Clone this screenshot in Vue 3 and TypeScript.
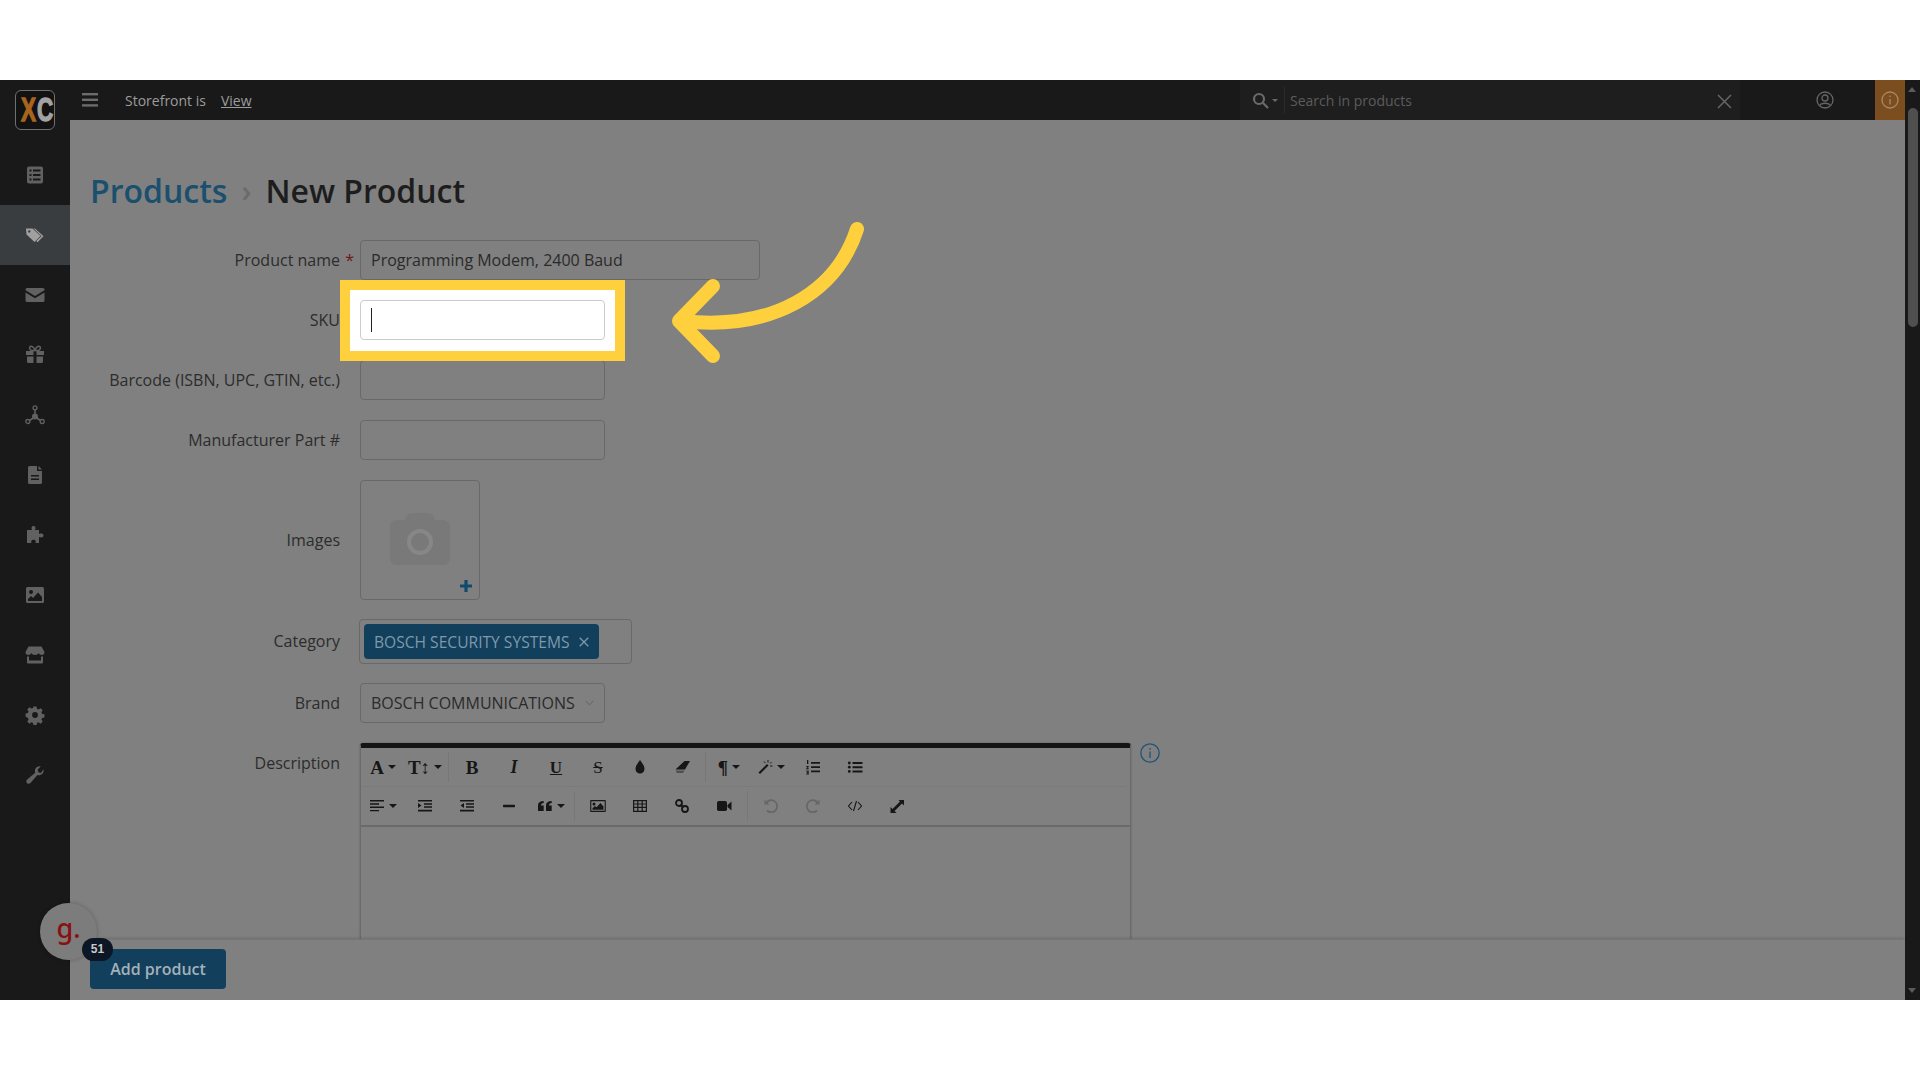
<template>
  <div class="page">
    <div class="app">
      <aside class="sidebar">
        <div class="logo-row">
          <div class="logo"><span class="logo-x">X</span><span class="logo-c">C</span></div>
        </div>
        <nav class="nav">
          <div v-for="item in navItems" :key="item.name" class="nav-item" :class="{ active: item.name === 'tag' }">
            <svg width="20" height="20" viewBox="0 0 20 20" fill="currentColor" v-html="item.svg"></svg>
          </div>
        </nav>
      </aside>

      <div class="center">
        <header class="topbar">
          <svg class="burger" width="16" height="14" viewBox="0 0 16 14" fill="currentColor">
            <rect width="16" height="2.4" /><rect y="5.6" width="16" height="2.4" /><rect y="11.2" width="16" height="2.4" />
          </svg>
          <span class="store">Storefront is</span>
          <a class="view">View</a>
          <div class="search">
            <svg width="17" height="17" viewBox="0 0 17 17" fill="none" stroke="currentColor" stroke-width="2.2">
              <circle cx="7" cy="7" r="5" /><path d="M10.8 10.8 16 16" />
            </svg>
            <i class="caret small"></i>
            <span class="search-sep"></span>
            <span class="search-text">Search in products</span>
            <svg class="search-x" width="15" height="15" viewBox="0 0 15 15" stroke="currentColor" stroke-width="1.5">
              <path d="M1 1l13 13M14 1 1 14" />
            </svg>
          </div>
          <div class="user">
            <svg width="18" height="18" viewBox="0 0 18 18" fill="none" stroke="currentColor" stroke-width="1.3">
              <circle cx="9" cy="9" r="8" /><circle cx="9" cy="7" r="3" /><path d="M3.8 14.5C5 11.5 13 11.500 14.2 14.5" />
            </svg>
          </div>
          <div class="notice">
            <svg width="18" height="18" viewBox="0 0 18 18" fill="none" stroke="currentColor" stroke-width="1.3">
              <circle cx="9" cy="9" r="8" /><path d="M9 8v5.5M9 4.4v1.6" />
            </svg>
          </div>
        </header>

        <main class="main">
          <h1 class="title"><span class="crumb">Products</span><span class="crumb-sep">›</span><span>New Product</span></h1>

          <div class="form">
            <div class="row">
              <label class="label">Product name<span class="star">*</span></label>
              <div class="field wide">Programming Modem, 2400 Baud</div>
            </div>
            <div class="row">
              <label class="label">SKU</label>
              <div class="focus">
                <div class="field sku"><span class="text-caret"></span></div>
              </div>
            </div>
            <div class="row">
              <label class="label">Barcode (ISBN, UPC, GTIN, etc.)</label>
              <div class="field"></div>
            </div>
            <div class="row">
              <label class="label">Manufacturer Part #</label>
              <div class="field"></div>
            </div>
            <div class="row">
              <label class="label">Images</label>
              <div class="image-box">
                <svg class="camera" width="60" height="52" viewBox="0 0 60 52">
                  <path fill="#797979" d="M6 7h9c1-4 3-7 7-7h16c4 0 6 3 7 7h9c3 0 6 3 6 6v33c0 3-3 6-6 6H6c-3 0-6-3-6-6V13c0-3 3-6 6-6z" />
                  <circle cx="30" cy="29" r="11" fill="#797979" stroke="#878787" stroke-width="4" />
                </svg>
                <svg class="plus" width="12" height="12" viewBox="0 0 12 12" fill="#124a6c">
                  <path d="M4.4 0h3.2v4.4H12v3.2H7.6V12H4.4V7.6H0V4.4h4.4z" />
                </svg>
              </div>
            </div>
            <div class="row tight">
              <label class="label">Category</label>
              <div class="tags">
                <span class="tag">BOSCH SECURITY SYSTEMS
                  <svg width="10" height="10" viewBox="0 0 10 10" stroke="currentColor" stroke-width="1.3"><path d="M.7.7l8.6 8.6M9.3.7.7 9.3" /></svg>
                </span>
              </div>
            </div>
            <div class="row">
              <label class="label">Brand</label>
              <div class="field select">
                BOSCH COMMUNICATIONS
                <svg width="9" height="6" viewBox="0 0 9 6" fill="none" stroke="#6b6b6b" stroke-width="1.1"><path d="M.7.8 4.5 4.8 8.3.8" /></svg>
              </div>
            </div>
            <div class="row top">
              <label class="label desc">Description</label>
              <div class="editor">
                <div class="toolbar">
                  <div class="tool-row">
                    <div v-for="(group, g) in toolbarTop" :key="g" class="tool-group">
                      <div v-for="t in group" :key="t.id" class="tool">
                        <span v-if="t.text" class="tool-text" :class="t.cls">{{ t.text }}</span>
                        <svg v-else width="16" height="16" viewBox="0 0 16 16" fill="currentColor" v-html="t.svg"></svg>
                        <i v-if="t.caret" class="caret"></i>
                      </div>
                    </div>
                  </div>
                  <div class="tool-row second">
                    <div v-for="(group, g) in toolbarBottom" :key="g" class="tool-group">
                      <div v-for="t in group" :key="t.id" class="tool" :class="{ muted: t.muted }">
                        <span v-if="t.text" class="tool-text" :class="t.cls">{{ t.text }}</span>
                        <svg v-else width="16" height="16" viewBox="0 0 16 16" fill="currentColor" v-html="t.svg"></svg>
                        <i v-if="t.caret" class="caret"></i>
                      </div>
                    </div>
                  </div>
                </div>
                <div class="edit-area"></div>
              </div>
              <svg class="info" width="20" height="20" viewBox="0 0 20 20" fill="none" stroke="#1d5475" stroke-width="1.3">
                <circle cx="10" cy="10" r="9.2" /><path d="M10 8.5v6.5M10 5v1.8" />
              </svg>
            </div>
          </div>

          <!-- callout arrow pointing at the SKU field -->
          <svg class="arrow" width="210" height="150" viewBox="0 0 210 150" fill="none" stroke="#fed03e" stroke-width="14" stroke-linecap="round" stroke-linejoin="round">
            <path d="M191 10C170 75 105 112 16 102" />
            <path d="M47 67 13 102 47 137" />
          </svg>

          <footer class="footer">
            <button class="add">Add product</button>
          </footer>
        </main>
      </div>

      <div class="scroll">
        <i class="scroll-up"></i>
        <div class="thumb"></div>
        <i class="scroll-down"></i>
      </div>

      <div class="chat">
        <span class="chat-g">g.</span>
        <span class="chat-count">51</span>
      </div>
    </div>
  </div>
</template>

<script setup lang="ts">
interface Tool {
  id: string
  text?: string
  cls?: string
  svg?: string
  caret?: boolean
  muted?: boolean
}

const navItems = [
  { name: 'orders', svg: '<path d="M4 1.500h12A2 2 0 0 1 18 3.500v13a2 2 0 0 1-2 2H4a2 2 0 0 1-2-2v-13a2 2 0 0 1 2-2zM4.500 4.500v2h2v-2zm3.500 0v2h7.500v-2zM4.500 9v2h2V9zM8 9v2h7.500V9zm-3.500 4.500v2h2v-2zm3.500 0v2h7.500v-2z" fill-rule="evenodd"/>' },
  { name: 'tag', svg: '<path d="M1 3.500H7.500L15.500 11 9.500 17 1.500 9.500zM4.300 5.200A1.200 1.200 0 1 0 4.300 7.600 1.200 1.200 0 0 0 4.300 5.200z" fill-rule="evenodd"/><path d="M10 3.500l8.500 7.800-6 6-1.300-1.200 5.200-4.800L8.700 3.500z"/>' },
  { name: 'mail', svg: '<path d="M2 3h16a1.500 1.500 0 0 1 1.500 1.500v.7L10 11 .5 5.200v-.7A1.500 1.500 0 0 1 2 3z"/><path d="M.5 7.500 10 13.300l9.500-5.800v8A1.500 1.500 0 0 1 18 17H2a1.500 1.500 0 0 1-1.500-1.500z"/>' },
  { name: 'gift', svg: '<path d="M1 6h7.500v4H1zM11.500 6H19v4h-7.500zM2 11.500h6.500V18H3.500A1.500 1.500 0 0 1 2 16.500zM11.500 11.500H18v5a1.500 1.500 0 0 1-1.500 1.500h-5z"/><path d="M10 5C8 1 6.500 1 5.500 1.500 4 2.300 4.500 5 6.500 5.500h7C15.500 5 16 2.300 14.500 1.500 13.500 1 12 1 10 5z" fill="none" stroke="currentColor" stroke-width="1.500"/>' },
  { name: 'tree', svg: '<circle cx="10" cy="2.800" r="2" fill="none" stroke="currentColor" stroke-width="1.300"/><circle cx="2.800" cy="16.500" r="2" fill="none" stroke="currentColor" stroke-width="1.300"/><circle cx="17.200" cy="16.500" r="2" fill="none" stroke="currentColor" stroke-width="1.300"/><circle cx="10" cy="11.500" r="3"/><path d="M10 5v5M4.500 15.500 9 12.500M15.500 15.500 11 12.500" stroke="currentColor" stroke-width="1.600"/>' },
  { name: 'file', svg: '<path d="M4.500 1H12v5h5v11.500a1.500 1.500 0 0 1-1.500 1.500h-11A1.500 1.500 0 0 1 3 17.500v-15A1.500 1.500 0 0 1 4.500 1zM6 10v1.500h8V10zm0 3.500V15h8v-1.500z" fill-rule="evenodd"/><path d="M13.500 1 17 4.500h-3.500z"/>' },
  { name: 'puzzle', svg: '<path d="M2 5h5C6 3 6.500 1 8.500 1S11 3 10 5h4v4c2-1 4.500-.500 4.500 1.500S16 13 14 12v6h-3.500c.7-1.500.3-3.300-2-3.300S5.800 16.500 6.500 18H2z"/>' },
  { name: 'image', svg: '<path d="M2.500 2h15A1.500 1.500 0 0 1 19 3.500v13a1.500 1.500 0 0 1-1.500 1.500h-15A1.500 1.500 0 0 1 1 16.500v-13A1.500 1.500 0 0 1 2.500 2zM6 5a2 2 0 1 0 0 4 2 2 0 0 0 0-4zM3 16h14v-4l-4-4.500-5 5.500-2-2-3 3z" fill-rule="evenodd"/>' },
  { name: 'store', svg: '<path d="M3.500 1.500h13L19.500 7c0 1.800-1.200 3-2.700 3S14 9 13.700 8c-.5 1.200-2 2-3.700 2S6.800 9.200 6.300 8C6 9 4.700 10 3.200 10S.5 8.800.5 7z"/><path d="M2 11.500h2v4h12v-4h2v6a1 1 0 0 1-1 1H3a1 1 0 0 1-1-1z"/>' },
  { name: 'gear', svg: '<path d="M8.300.5h3.400l.5 2.600 1.800.8 2.200-1.500 2.400 2.400-1.500 2.200.8 1.800 2.600.5v3.400l-2.600.5-.8 1.800 1.500 2.200-2.400 2.400-2.200-1.500-1.800.8-.5 2.600H8.300l-.5-2.600-1.800-.8-2.200 1.500-2.400-2.400 1.500-2.200-.8-1.800L-.5 11.700V8.300l2.600-.5.800-1.800L1.400 3.800l2.400-2.400L6 2.900l1.800-.8zM10 6.800a3.200 3.200 0 1 0 0 6.400 3.200 3.200 0 0 0 0-6.400z" fill-rule="evenodd" transform="translate(1 1) scale(.9)"/>' },
  { name: 'wrench', svg: '<path d="M18.500 4.200c.6 2.600-.8 5.200-3.300 5.800-1 .3-1.900.2-2.800-.1L5.500 18c-1 1-2.600 1.100-3.500.2-1-1-.9-2.600.2-3.600l8-6.800c-.4-1-.4-2-.2-3 .7-2.500 3.200-4 5.700-3.300l-3 3 .6 2.700 2.600.7z"/>' }
]

const ic = {
  drop: '<path d="M8 1c2 3 4.500 5.500 4.500 9a4.500 4.500 0 0 1-9 0C3.500 6.500 6 4 8 1z"/>',
  eraser: '<path d="M10.500 2H16l-5 8.500H1.500z"/><path d="M2 11.500h8.500L9 14H2.500z" opacity=".45"/>',
  wand: '<path d="M1.500 13.500 10 5l1.500 1.500L3 15z"/><path d="M11 1v2.500M14.500 3l-1.500 1.500M15.500 7H13M7 2.500 8.300 4" stroke="currentColor" fill="none"/>',
  ol: '<path d="M6 3h9v1.800H6zM6 7.200h9V9H6zM6 11.400h9v1.800H6z"/><path d="M2 1h1.300v4H2zM1.300 7h2.400v1l-1.300 1.200h1.300v1H1.300v-1l1.300-1.200H1.300zM1.300 11.500h2.400v4H1.300v-1h1.300v-.5H1.800v-1h.8v-.500H1.300z"/>',
  ul: '<path d="M5.500 3h10v2h-10zM5.500 7.200h10v2h-10zM5.500 11.400h10v2h-10z"/><circle cx="2.300" cy="4" r="1.400"/><circle cx="2.300" cy="8.200" r="1.400"/><circle cx="2.300" cy="12.400" r="1.400"/>',
  align: '<path d="M1 2h14v1.400H1zM1 5.300h9v1.400H1zM1 8.600h14V10H1zM1 11.900h9v1.400H1z"/>',
  outdent: '<path d="M1 2h14v1.600H1zM7 5.300h8v1.400H7zM7 8.300h8v1.400H7zM1 11.800h14v1.600H1z"/><path d="M1 5l3.500 2.500L1 10z"/>',
  indent: '<path d="M1 2h14v1.600H1zM7 5.300h8v1.400H7zM7 8.300h8v1.400H7zM1 11.800h14v1.600H1z"/><path d="M5 5 1.500 7.500 5 10z"/>',
  hr: '<rect x="2" y="6.800" width="12" height="2.400" rx=".6"/>',
  quote: '<path d="M6.700 3v2C5 5.300 4 6 4 7.500h2.700V13H1V7.500C1 4.500 3 3 6.700 3zM14.700 3v2C13 5.300 12 6 12 7.500h2.700V13H9V7.500C9 4.500 11 3 14.700 3z"/>',
  picture: '<path d="M1 2h14a.8.8 0 0 1 .8.8v10.400a.8.8 0 0 1-.8.8H1a.8.8 0 0 1-.8-.8V2.800A.8.8 0 0 1 1 2zm.3 1.200v9.600h13.400V3.200zM4 4.500a1.500 1.500 0 1 1 0 3 1.500 1.500 0 0 1 0-3zM2.500 11.800v-1.500L5 8l1.500 1.300L10.500 5l3 3.500v3.300z" fill-rule="evenodd"/>',
  table: '<path d="M1 2h14v12H1zm1.200 1.200v2.200h3V3.200zm4.200 0v2.200h3.200V3.200zm4.400 0v2.200h3V3.200zM2.200 6.500v2.300h3V6.500zm4.200 0v2.300h3.200V6.500zm4.400 0v2.300h3V6.500zM2.200 10v2.800h3V10zm4.200 0v2.800h3.200V10zm4.400 0v2.800h3V10z" fill-rule="evenodd"/>',
  link: '<circle cx="5" cy="5" r="3" fill="none" stroke="currentColor" stroke-width="1.800"/><circle cx="11" cy="11" r="3" fill="none" stroke="currentColor" stroke-width="1.800"/><path d="M6.500 6.500 9.500 9.500" stroke="currentColor" stroke-width="1.800"/>',
  video: '<rect x="1" y="3" width="10" height="10" rx="1.800"/><path d="M11.500 7 15.500 3.500v9L11.500 9z"/>',
  undo: '<path d="M3.500 4.500A6 6 0 1 1 4 12.500" fill="none" stroke="currentColor" stroke-width="1.800"/><path d="M1.500 1.500v5h5z"/>',
  redo: '<path d="M12.500 4.500A6 6 0 1 0 12 12.500" fill="none" stroke="currentColor" stroke-width="1.800"/><path d="M14.500 1.500v5h-5z"/>',
  code: '<path d="M5 4 1.500 8 5 12M11 4l3.500 4L11 12M9.500 3 6.500 13" fill="none" stroke="currentColor" stroke-width="1.100"/>',
  full: '<path d="M9.500 2H15v5.500L13 5.500 5.500 13 7.500 15H1.500V9l2 2L11 3.500z"/>'
}

const toolbarTop: Tool[][] = [
  [
    { id: 'font', text: 'A', cls: 'serif big', caret: true },
    { id: 'size', text: 'T↕', cls: 'serif big', caret: true }
  ],
  [
    { id: 'bold', text: 'B', cls: 'serif big' },
    { id: 'italic', text: 'I', cls: 'serif italic' },
    { id: 'under', text: 'U', cls: 'serif under' },
    { id: 'strike', text: 'S', cls: 'serif strike' },
    { id: 'drop', svg: ic.drop },
    { id: 'eraser', svg: ic.eraser }
  ],
  [
    { id: 'para', text: '¶', cls: 'serif big', caret: true },
    { id: 'wand', svg: ic.wand, caret: true },
    { id: 'ol', svg: ic.ol },
    { id: 'ul', svg: ic.ul }
  ]
]

const toolbarBottom: Tool[][] = [
  [
    { id: 'align', svg: ic.align, caret: true },
    { id: 'outdent', svg: ic.outdent },
    { id: 'indent', svg: ic.indent },
    { id: 'hr', svg: ic.hr },
    { id: 'quote', svg: ic.quote, caret: true }
  ],
  [
    { id: 'picture', svg: ic.picture },
    { id: 'table', svg: ic.table },
    { id: 'link', svg: ic.link },
    { id: 'video', svg: ic.video }
  ],
  [
    { id: 'undo', svg: ic.undo, muted: true },
    { id: 'redo', svg: ic.redo, muted: true },
    { id: 'code', svg: ic.code },
    { id: 'full', svg: ic.full }
  ]
]
</script>

<style>
html,
body {
  margin: 0;
  background: #fff;
  overflow: hidden;
}
</style>

<style scoped>
.page {
  width: 1920px;
  height: 1080px;
  padding: 80px 0;
  box-sizing: border-box;
  background: #fff;
  font-family: "Open Sans", "Liberation Sans", sans-serif;
  font-size: 16px;
  color: #2a2a2a;
}

.app {
  position: relative;
  display: flex;
  height: 920px;
  background: #808080;
  overflow: hidden;
}

/* sidebar */
.sidebar {
  flex: 0 0 70px;
  background: #191919;
}

.logo-row {
  display: flex;
  justify-content: center;
  height: 65px;
  padding-top: 10px;
  box-sizing: border-box;
}

.logo {
  display: flex;
  align-items: center;
  justify-content: center;
  width: 40px;
  height: 40px;
  box-sizing: border-box;
  border: 1px solid #707070;
  border-radius: 6px;
  background: #121212;
  font-family: "Liberation Sans", sans-serif;
  font-size: 30px;
  font-weight: 700;
}

.logo-x,
.logo-c {
  display: block;
  width: 16px;
  transform: scale(0.75, 1.08);
  text-align: center;
  -webkit-text-stroke: 1.2px currentColor;
}

.logo-x {
  color: #a9651d;
}

.logo-c {
  color: #a3a3a3;
}

.nav-item {
  display: flex;
  align-items: center;
  justify-content: center;
  height: 60px;
  color: #616161;
}

.nav-item.active {
  background: #3a3d3f;
  color: #a0a0a0;
}

/* top bar */
.center {
  flex: 1;
  display: flex;
  flex-direction: column;
  min-width: 0;
}

.topbar {
  display: flex;
  align-items: center;
  flex: 0 0 40px;
  background: #191919;
  color: #9c9c9c;
  font-size: 14px;
}

.burger {
  margin-left: 12px;
  color: #6c6c6c;
}

.store {
  margin-left: 27px;
}

.view {
  margin-left: 15px;
  text-decoration: underline;
}

.search {
  display: flex;
  align-items: center;
  width: 500px;
  height: 40px;
  margin-left: auto;
  padding-left: 12px;
  box-sizing: border-box;
  background: #1e1e1e;
  color: #6a6a6a;
}

.search-sep {
  width: 1px;
  height: 26px;
  margin-left: 6px;
  background: #2a2a2a;
}

.search-text {
  margin-left: 5px;
  color: #5c5c5c;
}

.search-x {
  margin-left: auto;
  margin-right: 8px;
  margin-top: 2px;
  color: #666;
}

.user {
  display: flex;
  justify-content: flex-end;
  width: 135px;
  padding-right: 41px;
  box-sizing: border-box;
  color: #666;
}

.notice {
  display: flex;
  align-items: center;
  justify-content: center;
  width: 30px;
  height: 40px;
  background: #7c4d1e;
  color: #a98a68;
}

/* main */
.main {
  position: relative;
  flex: 1;
  display: flex;
  flex-direction: column;
  min-height: 0;
  padding-left: 20px;
}

.title {
  display: flex;
  align-items: center;
  height: 40px;
  margin: 50px 0 0;
  font-size: 32px;
  font-weight: 600;
  color: #1d1d1d;
}

.crumb {
  color: #1a4f6e;
}

.crumb-sep {
  margin: 0 14px;
  color: #6b6b6b;
  font-weight: 600;
  font-size: 30px;
}

.form {
  flex: 1;
  display: flex;
  flex-direction: column;
  gap: 20px;
  margin-top: 30px;
  min-height: 0;
  overflow: visible;
}

.row {
  display: flex;
  align-items: center;
  gap: 20px;
}

.row.top {
  align-items: flex-start;
}

.row.tight {
  margin: -1px 0;
}

.row.tight .label {
  margin-top: -2px;
}

.label {
  position: relative;
  flex: 0 0 250px;
  text-align: right;
  color: #2c2c2c;
}

.label.desc {
  margin-top: 9px;
}

.star {
  position: absolute;
  right: -14px;
  color: #6a1818;
}

.field {
  display: flex;
  align-items: center;
  width: 245px;
  height: 40px;
  padding: 0 10px;
  box-sizing: border-box;
  border: 1px solid #696969;
  border-radius: 4px;
  background: #808080;
  color: #2a2a2a;
}

.field.wide {
  width: 400px;
}

.focus {
  position: relative;
}

.focus::before {
  content: "";
  position: absolute;
  inset: -20px -20px -21px -20px;
  border: 10px solid #fed03e;
  background: #fff;
  z-index: 1;
}

.field.sku {
  position: relative;
  z-index: 2;
  border-color: #ccc;
  background: #fff;
}

.text-caret {
  width: 1px;
  height: 24px;
  background: #222;
}

.image-box {
  position: relative;
  display: flex;
  align-items: center;
  justify-content: center;
  width: 120px;
  height: 120px;
  box-sizing: border-box;
  border: 1px solid #696969;
  border-radius: 4px;
}

.camera {
  margin-top: -2px;
}

.plus {
  position: absolute;
  right: 7px;
  bottom: 7px;
}

.tags {
  display: flex;
  align-items: center;
  width: 273px;
  height: 45px;
  margin-left: -1px;
  padding-left: 4px;
  box-sizing: border-box;
  border: 1px solid #696969;
  border-radius: 4px;
}

.tag {
  display: flex;
  align-items: center;
  gap: 9px;
  height: 35px;
  padding: 0 10px;
  border-radius: 4px;
  background: #123f5c;
  color: #7d99ab;
  font-size: 15.6px;
  white-space: nowrap;
}

.select {
  justify-content: space-between;
  white-space: nowrap;
}

/* editor */
.editor {
  width: 771px;
  height: 400px;
  flex: none;
  box-sizing: border-box;
  border: 1px solid #6b6b6b;
  border-top: 5px solid #141414;
  border-radius: 3px 3px 0 0;
  box-shadow: 0 0 2px rgba(0, 0, 0, 0.3);
}

.toolbar {
  border-bottom: 2px solid #6a6a6a;
  padding-left: 1px;
}

.tool-row {
  display: flex;
  height: 39px;
  margin-right: 4px;
  border-bottom: 1px solid #7a7a7a;
  box-sizing: border-box;
}

.tool-row.second {
  height: 38px;
  border-bottom: 0;
}

.tool-group {
  display: flex;
  align-items: center;
  height: 30px;
  margin-top: 4px;
  padding-right: 2px;
  border-right: 1px solid #777;
}

.tool-group:last-child {
  border-right: 0;
}

.tool-group + .tool-group {
  margin-left: 2px;
}

.tool {
  display: flex;
  align-items: center;
  justify-content: center;
  gap: 4px;
  width: 42px;
  height: 30px;
  color: #161616;
}

.tool.muted {
  color: #666;
}

.tool-text {
  font-size: 15px;
  line-height: 1;
}

.serif {
  font-family: "Liberation Serif", serif;
}

.big {
  font-size: 19px;
  font-weight: 700;
}

.serif.italic {
  font-size: 18px;
  font-style: italic;
  font-weight: 700;
}

.serif.under {
  font-size: 17px;
  font-weight: 700;
  text-decoration: underline;
}

.serif.strike {
  font-size: 17px;
  text-decoration: line-through;
}

.caret {
  width: 0;
  height: 0;
  border-style: solid;
  border-width: 4px 4px 0;
  border-color: currentColor transparent transparent;
}

.caret.small {
  margin-left: 3px;
  border-width: 3px 3px 0;
}

.info {
  margin: 0 0 0 -11px;
}

.arrow {
  position: absolute;
  left: 596px;
  top: 99px;
  z-index: 3;
}

/* footer */
.footer {
  position: relative;
  z-index: 2;
  flex: 0 0 61px;
  display: flex;
  align-items: center;
  margin-left: -20px;
  padding: 0 0 2px 20px;
  box-sizing: border-box;
  border-top: 1px solid #757575;
  background: #808080;
  box-shadow: 0 -2px 3px -1px rgba(0, 0, 0, 0.15);
}

.add {
  width: 136px;
  height: 40px;
  padding: 0;
  border: 0;
  border-radius: 4px;
  background: #123f5c;
  color: #a3b1ba;
  font-family: inherit;
  font-size: 16px;
  font-weight: 600;
}

/* scrollbar */
.scroll {
  position: relative;
  z-index: 3;
  flex: 0 0 15px;
  background: #191919;
}

.thumb {
  position: absolute;
  left: 3px;
  right: 2px;
  top: 28px;
  height: 219px;
  border-radius: 5px;
  background: #4f4f4f;
}

.scroll-up,
.scroll-down {
  position: absolute;
  left: 3px;
  width: 0;
  height: 0;
  border-style: solid;
}

.scroll-up {
  top: 7px;
  border-width: 0 4.5px 5px;
  border-color: transparent transparent #5a5a5a;
}

.scroll-down {
  bottom: 7px;
  border-width: 5px 4.5px 0;
  border-color: #5a5a5a transparent transparent;
}

/* chat widget */
.chat {
  position: absolute;
  left: 40px;
  top: 823px;
  z-index: 4;
  width: 57px;
  height: 57px;
  border-radius: 50%;
  background: #7c7c7c;
  box-shadow: 0 0 4px rgba(0, 0, 0, 0.25);
  text-align: center;
}

.chat-g {
  display: block;
  margin-top: 6px;
  font-family: "Noto Sans", sans-serif;
  font-size: 27px;
  font-weight: 500;
  line-height: 38px;
  color: #8a1010;
}

.chat-count {
  position: absolute;
  left: 42px;
  top: 35px;
  width: 31px;
  height: 23px;
  border-radius: 12px;
  background: #0c1624;
  color: #c8c8c8;
  font-family: "Liberation Sans", sans-serif;
  font-size: 12px;
  font-weight: 700;
  line-height: 23px;
}
</style>
